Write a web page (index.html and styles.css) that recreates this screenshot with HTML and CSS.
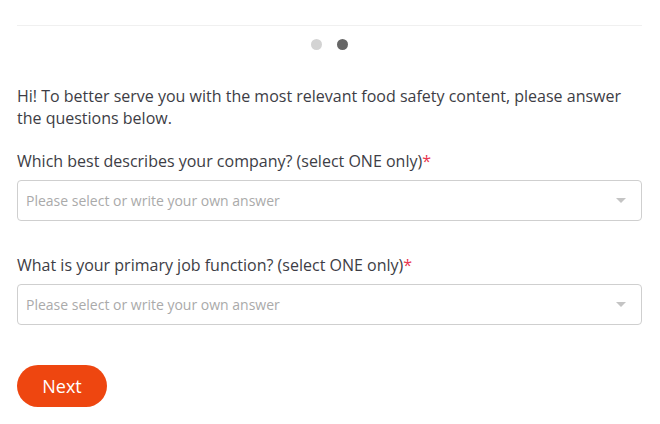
FILE: index.html
```html
<!DOCTYPE html>
<html>
<head>
<meta charset="utf-8">
<link rel="stylesheet" href="styles.css">
</head>
<body>
<div class="page">
  <div class="divider"></div>
  <div class="dots"><span class="dot"></span><span class="dot active"></span></div>
  <p class="intro">Hi! To better serve you with the most relevant food safety content, please answer the questions below.</p>
  <div class="field">
    <label class="label">Which best describes your company? (select ONE only)<span class="req">*</span></label>
    <div class="select"><span class="ph">Please select or write your own answer</span><span class="caret"></span></div>
  </div>
  <div class="field second">
    <label class="label">What is your primary job function? (select ONE only)<span class="req">*</span></label>
    <div class="select"><span class="ph">Please select or write your own answer</span><span class="caret"></span></div>
  </div>
  <button class="next">Next</button>
</div>
</body>
</html>
```
FILE: styles.css
```css
html, body { margin: 0; padding: 0; background: #fff; }
body { font-family: "Open Sans", "Liberation Sans", sans-serif; color: #3f3f46; }
.page { padding: 25px 18px 0 17px; }
.divider { height: 1px; background: #f0f0f0; }
.dots { display: flex; justify-content: center; gap: 15px; margin-top: 13px; height: 11px; }
.dot { width: 11px; height: 11px; border-radius: 50%; background: #d3d3d3; }
.dot.active { background: #666; }
.intro { margin: 35px 0 0; font-size: 16px; line-height: 22px; color: #3d3d45; }
.field { margin-top: 21px; }
.field.second { margin-top: 33px; }
.label { display: block; font-size: 16px; line-height: 22px; color: #3d3d45; }
.req { color: #e8364f; }
.select { margin-top: 8px; height: 39px; border: 1px solid #cfcfcf; border-radius: 4px; display: flex; align-items: center; justify-content: space-between; padding: 0 15px 0 8px; }
.ph { font-size: 14px; color: #aaa; }
.caret { width: 0; height: 0; border-left: 5px solid transparent; border-right: 5px solid transparent; border-top: 5px solid #c4c4c4; }
.next { margin-top: 40px; width: 90px; height: 42px; border: none; border-radius: 21px; background: #ee4610; color: #fff; font-family: "Open Sans", "Liberation Sans", sans-serif; font-size: 18px; padding: 0; cursor: pointer; }
```
